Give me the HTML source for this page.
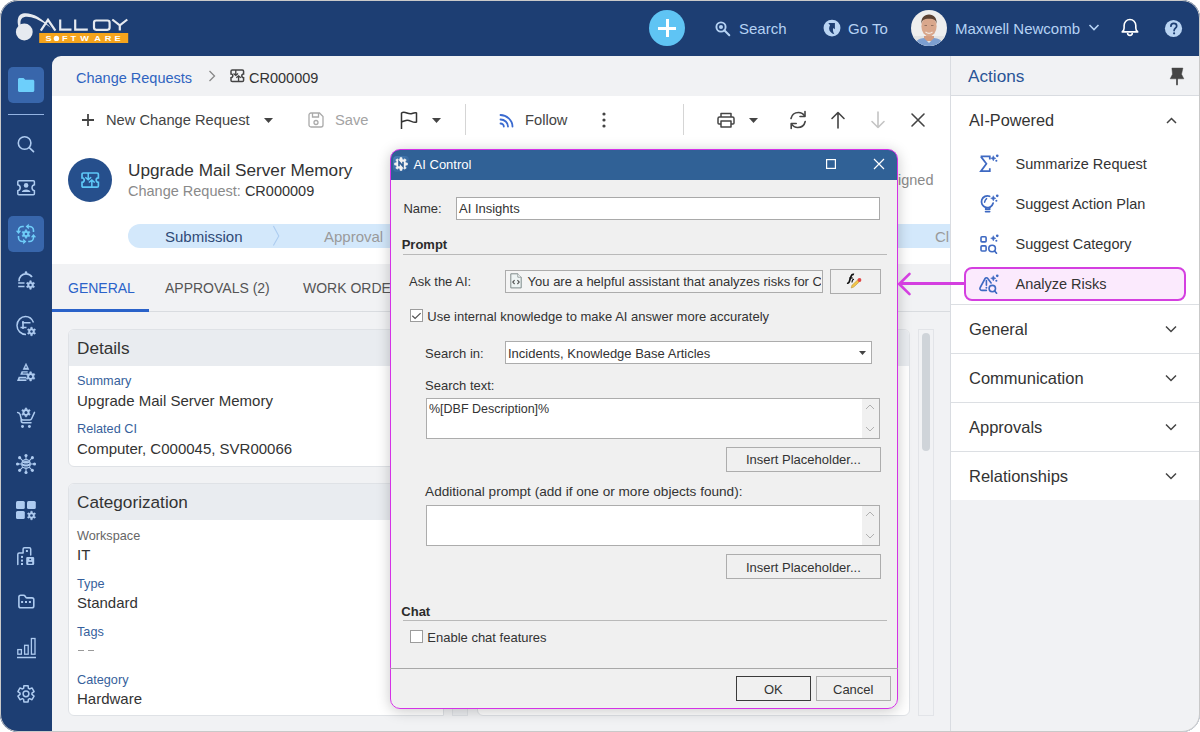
<!DOCTYPE html>
<html><head><meta charset="utf-8">
<style>
*{box-sizing:border-box;margin:0;padding:0}
html,body{width:1200px;height:732px;overflow:hidden;background:#fff;font-family:"Liberation Sans",sans-serif}
.a{position:absolute}
.t{position:absolute;white-space:nowrap;line-height:1}
#win{position:absolute;left:0;top:0;width:1200px;height:732px;border-radius:18px;background:#1d3e73;overflow:hidden}
#frame{position:absolute;left:0;top:0;width:1200px;height:732px;border:1px solid #c9c9c9;border-radius:18px;z-index:100;pointer-events:none}
svg{position:absolute;overflow:visible}
.dlg .t{font-family:"Liberation Sans",sans-serif}
</style></head>
<body>
<div id="win">

<svg style="left:0;top:0" width="140" height="50" viewBox="0 0 140 50">
<path d="M18.5 26.5 C17 22 17.5 16.5 20.5 14.5 C24 12.2 31 13 38 17 C43 20 47.5 24 51 28 C46 24.5 41 21 36 18.8 C30 16.3 25 16 22.5 17.8 C20.5 19.3 20 22.5 20.8 25.5 Z" fill="#e6eaf0"/>
<circle cx="24.3" cy="32" r="8.4" fill="#e6eaf0"/>
<path d="M40.8 30.6 L48 19.8 L55.4 30.6" fill="none" stroke="#e6eaf0" stroke-width="2.2" stroke-linejoin="miter"/>
<path d="M60.2 19.5 V29.7 H71.5 M75.2 19.5 V29.7 H87.8" fill="none" stroke="#e6eaf0" stroke-width="2.2"/>
<rect x="94" y="20.5" width="15.6" height="9.3" rx="2.2" fill="none" stroke="#e6eaf0" stroke-width="2.2"/>
<path d="M112.3 19.5 L119.8 25.3 L127.3 19.5 M119.8 25.3 V30.6" fill="none" stroke="#e6eaf0" stroke-width="2.2"/>
<rect x="39.2" y="33" width="89" height="10" fill="#f5a41c"/>
<text x="48.50" y="41.3" text-anchor="middle" font-family="Liberation Sans" font-size="8" font-weight="700" fill="#fff" transform="translate(48.50 0) scale(1.15 1) translate(-48.50 0)">S</text><text x="64.95" y="41.3" text-anchor="middle" font-family="Liberation Sans" font-size="8" font-weight="700" fill="#fff" transform="translate(64.95 0) scale(1.15 1) translate(-64.95 0)">F</text><text x="73.35" y="41.3" text-anchor="middle" font-family="Liberation Sans" font-size="8" font-weight="700" fill="#fff" transform="translate(73.35 0) scale(1.15 1) translate(-73.35 0)">T</text><text x="84.72" y="41.3" text-anchor="middle" font-family="Liberation Sans" font-size="8" font-weight="700" fill="#fff" transform="translate(84.72 0) scale(1.15 1) translate(-84.72 0)">W</text><text x="97.50" y="41.3" text-anchor="middle" font-family="Liberation Sans" font-size="8" font-weight="700" fill="#fff" transform="translate(97.50 0) scale(1.15 1) translate(-97.50 0)">A</text><text x="107.95" y="41.3" text-anchor="middle" font-family="Liberation Sans" font-size="8" font-weight="700" fill="#fff" transform="translate(107.95 0) scale(1.15 1) translate(-107.95 0)">R</text><text x="117.50" y="41.3" text-anchor="middle" font-family="Liberation Sans" font-size="8" font-weight="700" fill="#fff" transform="translate(117.50 0) scale(1.15 1) translate(-117.50 0)">E</text><circle cx="56.4" cy="38.4" r="2.7" fill="#fff"/>
</svg>
<div class="a" style="left:649px;top:10px;width:36px;height:36px;border-radius:50%;background:#5fc4f4"></div>
<div class="a" style="left:658px;top:26.5px;width:18px;height:3px;background:#fff"></div>
<div class="a" style="left:665.5px;top:19px;width:3px;height:18px;background:#fff"></div>
<svg style="left:714px;top:20px" width="18" height="18" viewBox="0 0 18 18"><circle cx="7" cy="7" r="4.6" fill="none" stroke="#b5d2f4" stroke-width="1.9"/>
<circle cx="7" cy="7" r="2" fill="#b5d2f4"/>
<path d="M10.3 10.3 L15.3 15.3" stroke="#b5d2f4" stroke-width="2" stroke-linecap="round"/></svg>
<div class="t" style="left:739px;top:21.30px;font-size:15px;color:#b5d2f4;font-weight:400;">Search</div>
<svg style="left:823px;top:19px" width="18" height="18" viewBox="0 0 18 18"><circle cx="9" cy="9.1" r="8.45" fill="#b9d4f3"/>
<path d="M5.3 4.1 L11.9 4.1 L11.9 10.2 L10.3 8.9 C9.5 10.8 10.1 13 11.45 15.3 C8.4 14.2 6.1 12.2 6.1 9.4 C6.1 8.3 6.5 7.3 7.1 6.2 Z" fill="#1d3e73"/></svg>
<div class="t" style="left:848px;top:21.30px;font-size:15px;color:#b5d2f4;font-weight:400;">Go To</div>
<svg style="left:911px;top:10px" width="36" height="36" viewBox="0 0 36 36"><defs><clipPath id="av"><circle cx="18" cy="18" r="18"/></clipPath></defs>
<g clip-path="url(#av)"><rect width="36" height="36" fill="#eeeeee"/><rect x="0" y="26" width="36" height="10" fill="#e2e2e2"/>
<path d="M13 26 L13 31 L23 31 L23 26 Z" fill="#d39c80"/>
<path d="M2 37 C4 30 9 28.5 13 28 L18 33 L23 28 C27 28.5 32 30 34 37 Z" fill="#7d9fd0"/>
<ellipse cx="18" cy="16.5" rx="7.6" ry="9.8" fill="#d9a78c"/>
<path d="M10.3 14 C10 8 13 4.5 18 4.5 C23 4.5 26 8 25.7 14 C25 10.5 23.5 8.8 18 8.8 C12.5 8.8 11 10.5 10.3 14 Z" fill="#5b4132"/>
<path d="M14.5 22 C16.5 23.5 19.5 23.5 21.5 22" fill="none" stroke="#f4e8e0" stroke-width="1.2"/>
<path d="M13.5 15.5 H16 M20 15.5 H22.5" stroke="#8a6a5a" stroke-width="0.9"/></g></svg>
<div class="t" style="left:955px;top:21.30px;font-size:15px;color:#b5d2f4;font-weight:400;">Maxwell Newcomb</div>
<svg style="left:1088px;top:22px" width="12" height="10" viewBox="0 0 12 10"><path d="M1.5 3 L6 7.5 L10.5 3" fill="none" stroke="#b5d2f4" stroke-width="1.6"/></svg>
<svg style="left:0;top:0" width="1200" height="56" viewBox="0 0 1200 56"><path d="M1122.2 31.9 C1123.4 30.9 1124.1 29.6 1124.1 27.9 V25.6 C1124.1 22.1 1126.7 19.5 1129.95 19.5 C1133.2 19.5 1135.8 22.1 1135.8 25.6 V27.9 C1135.8 29.6 1136.5 30.9 1137.7 31.9 Z" fill="none" stroke="#fff" stroke-width="1.6" stroke-linejoin="round"/><path d="M1127.6 33 A2.35 2.35 0 0 0 1132.3 33" fill="none" stroke="#fff" stroke-width="1.6"/></svg>
<svg style="left:1164px;top:18.5px" width="19" height="19" viewBox="0 0 19 19"><circle cx="9.5" cy="9.5" r="8.6" fill="#b9d4f3"/>
<path d="M6.9 7.2 C6.9 5.5 8.1 4.4 9.8 4.4 C11.5 4.4 12.7 5.5 12.7 7 C12.7 9.2 10.1 9.3 10.1 11.6" fill="none" stroke="#1d3e73" stroke-width="1.7" stroke-linecap="round"/><circle cx="10.1" cy="14.3" r="1.1" fill="#1d3e73"/></svg>
<div class="a" style="left:8px;top:67px;width:36px;height:36px;border-radius:5px;background:#3866ab"></div>
<svg style="left:17.7px;top:78px" width="16.3" height="14" viewBox="0 0 16.3 14"><path d="M0 1.5 C0 0.7 0.7 0 1.5 0 L5.5 0 L7.3 1.8 L14.8 1.8 C15.6 1.8 16.3 2.5 16.3 3.3 L16.3 12.5 C16.3 13.3 15.6 14 14.8 14 L1.5 14 C0.7 14 0 13.3 0 12.5 Z" fill="#6dcffb"/></svg>
<div class="a" style="left:8px;top:114px;width:36px;height:1.3px;background:#93b3e2"></div>
<div class="a" style="left:8px;top:216px;width:36px;height:36px;border-radius:5px;background:#3866ab"></div>
<svg style="left:0;top:0" width="52" height="732" viewBox="0 0 52 732"><circle cx="24.6" cy="143" r="6.3" fill="none" stroke="#aecbf0" stroke-width="1.6"/><path d="M29.3 147.7 L33.5 151.6" stroke="#aecbf0" stroke-width="1.7" stroke-linecap="round"/><path d="M18.8 180.8 H33.4 C34.2 180.8 34.4 181.2 34.4 181.8 V184.8 C32.9 185.2 32 186.3 32 187.8 C32 189.3 32.9 190.4 34.4 190.8 V193.8 C34.4 194.4 34.2 194.7 33.4 194.7 H18.8 C18 194.7 17.8 194.4 17.8 193.8 V190.8 C19.3 190.4 20.2 189.3 20.2 187.8 C20.2 186.3 19.3 185.2 17.8 184.8 V181.8 C17.8 181.2 18 180.8 18.8 180.8 Z" fill="none" stroke="#aecbf0" stroke-width="1.5"/><circle cx="26.1" cy="185.4" r="2.3" fill="#aecbf0"/><path d="M21.8 192 C21.8 188.5 30.4 188.5 30.4 192 Z" fill="#aecbf0"/><path d="M18.5 232 V230.5 C18.5 228.3 20.3 226.5 22.5 226.5 H23.8 M28.2 226.5 H29.5 C31.7 226.5 33.5 228.3 33.5 230.5 V232 M33.5 236 V237.5 C33.5 239.7 31.7 241.5 29.5 241.5 H28.2 M23.8 241.5 H22.5 C20.3 241.5 18.5 239.7 18.5 237.5 V236" fill="none" stroke="#6fcdf8" stroke-width="1.6"/><path d="M15.8 230.8 H21.2 L18.5 234 Z M28.8 223.8 V229.2 L25.6 226.5 Z M30.8 237.2 H36.2 L33.5 234 Z M23.2 238.8 V244.2 L26.4 241.5 Z" fill="#6fcdf8"/><path d="M25.19 231.11 L25.31 229.86 L26.69 229.86 L26.81 231.11 L27.50 231.40 L28.09 231.85 L29.24 231.33 L29.93 232.53 L28.91 233.26 L29.00 234.00 L28.91 234.74 L29.93 235.47 L29.24 236.67 L28.09 236.15 L27.50 236.60 L26.81 236.89 L26.69 238.14 L25.31 238.14 L25.19 236.89 L24.50 236.60 L23.91 236.15 L22.76 236.67 L22.07 235.47 L23.09 234.74 L23.00 234.00 L23.09 233.26 L22.07 232.53 L22.76 231.33 L23.91 231.85 L24.50 231.40 Z" fill="#6fcdf8" stroke="#6fcdf8" stroke-width="0.6" stroke-linejoin="round"/><circle cx="26" cy="234" r="1.3" fill="#3866ab"/><path d="M19 281.2 C19 277 22 273.8 26 273.8 C28.5 273.8 30.7 275 32 277" fill="none" stroke="#aecbf0" stroke-width="1.7"/><circle cx="26" cy="272.6" r="1.3" fill="#aecbf0"/><path d="M18.2 283 H24.5 M18.2 286.5 H24.5" stroke="#aecbf0" stroke-width="1.5"/><path d="M29.69 282.11 L29.79 280.76 L31.21 280.76 L31.31 282.11 L32.00 282.40 L32.59 282.85 L33.82 282.27 L34.53 283.49 L33.41 284.26 L33.50 285.00 L33.41 285.74 L34.53 286.51 L33.82 287.73 L32.59 287.15 L32.00 287.60 L31.31 287.89 L31.21 289.24 L29.79 289.24 L29.69 287.89 L29.00 287.60 L28.41 287.15 L27.18 287.73 L26.47 286.51 L27.59 285.74 L27.50 285.00 L27.59 284.26 L26.47 283.49 L27.18 282.27 L28.41 282.85 L29.00 282.40 Z" fill="#aecbf0" stroke="#aecbf0" stroke-width="0.6" stroke-linejoin="round"/><circle cx="30.5" cy="285" r="1.2" fill="#1d3e73"/><path d="M33.5 322.5 C32 318.7 28.8 316.5 25.5 316.5 C21 316.5 17 320.5 17 325.5 C17 330.5 21 334.5 26 334.5" fill="none" stroke="#aecbf0" stroke-width="1.5"/><path d="M22 322.7 H30.5 M20.5 327.5 H26.5 M23 321 V329" stroke="#aecbf0" stroke-width="1.6"/><path d="M30.69 328.61 L30.79 327.26 L32.21 327.26 L32.31 328.61 L33.00 328.90 L33.59 329.35 L34.82 328.77 L35.53 329.99 L34.41 330.76 L34.50 331.50 L34.41 332.24 L35.53 333.01 L34.82 334.23 L33.59 333.65 L33.00 334.10 L32.31 334.39 L32.21 335.74 L30.79 335.74 L30.69 334.39 L30.00 334.10 L29.41 333.65 L28.18 334.23 L27.47 333.01 L28.59 332.24 L28.50 331.50 L28.59 330.76 L27.47 329.99 L28.18 328.77 L29.41 329.35 L30.00 328.90 Z" fill="#aecbf0" stroke="#aecbf0" stroke-width="0.6" stroke-linejoin="round"/><circle cx="31.5" cy="331.5" r="1.2" fill="#1d3e73"/><path d="M26 363.4 L28.9 369.5 H23.1 Z" fill="#aecbf0" stroke="#aecbf0" stroke-width="0.6" stroke-linejoin="round"/><rect x="25.3" y="366.5" width="1.4" height="1.3" fill="#1d3e73"/><path d="M21.6 371.2 H27.9 L26.6 374.8 H20.2 Z" fill="#aecbf0"/><path d="M22.8 373 H27.3" stroke="#1d3e73" stroke-width="0.9"/><path d="M18.7 376.7 H26 L26.5 381 H17 Z" fill="#aecbf0"/><path d="M19.7 378.9 H26" stroke="#1d3e73" stroke-width="0.9"/><path d="M29.70 373.22 L29.84 371.86 L31.36 371.86 L31.50 373.22 L32.25 373.54 L32.90 374.04 L34.15 373.48 L34.91 374.79 L33.80 375.59 L33.90 376.40 L33.80 377.21 L34.91 378.01 L34.15 379.32 L32.90 378.76 L32.25 379.26 L31.50 379.58 L31.36 380.94 L29.84 380.94 L29.70 379.58 L28.95 379.26 L28.30 378.76 L27.05 379.32 L26.29 378.01 L27.40 377.21 L27.30 376.40 L27.40 375.59 L26.29 374.79 L27.05 373.48 L28.30 374.04 L28.95 373.54 Z" fill="#aecbf0" stroke="#aecbf0" stroke-width="0.6" stroke-linejoin="round"/><circle cx="30.6" cy="376.4" r="1.5" fill="#1d3e73"/><path d="M17.6 412.4 C18.8 412.4 19.8 413.3 20.2 414.6 L21.1 418.5 C21.3 419.4 22 420.1 23 420.1 H29.8 C30.6 420.1 31.3 419.6 31.6 418.8 L34.5 412.4 M21.2 419 V420.8 C21.2 421.9 22 422.7 23 422.7 H31" fill="none" stroke="#aecbf0" stroke-width="1.5" stroke-linecap="round"/><circle cx="22.5" cy="426.5" r="1.45" fill="#aecbf0"/><circle cx="29.4" cy="426.5" r="1.45" fill="#aecbf0"/><path d="M25.13 409.32 L25.26 407.96 L26.74 407.96 L26.87 409.32 L27.60 409.63 L28.23 410.11 L29.47 409.54 L30.21 410.82 L29.10 411.61 L29.20 412.40 L29.10 413.19 L30.21 413.98 L29.47 415.26 L28.23 414.69 L27.60 415.17 L26.87 415.48 L26.74 416.84 L25.26 416.84 L25.13 415.48 L24.40 415.17 L23.77 414.69 L22.53 415.26 L21.79 413.98 L22.90 413.19 L22.80 412.40 L22.90 411.61 L21.79 410.82 L22.53 409.54 L23.77 410.11 L24.40 409.63 Z" fill="#aecbf0" stroke="#aecbf0" stroke-width="0.6" stroke-linejoin="round"/><circle cx="26" cy="412.4" r="1.5" fill="#1d3e73"/><path d="M30.50 464.00 L34.50 464.00" stroke="#aecbf0" stroke-width="1.1"/><circle cx="34.50" cy="464.00" r="1.55" fill="#aecbf0"/><path d="M29.18 467.18 L32.36 470.36" stroke="#aecbf0" stroke-width="1.1"/><circle cx="32.36" cy="470.36" r="1.55" fill="#aecbf0"/><path d="M26.00 468.50 L26.00 472.50" stroke="#aecbf0" stroke-width="1.1"/><circle cx="26.00" cy="472.50" r="1.55" fill="#aecbf0"/><path d="M22.82 467.18 L19.64 470.36" stroke="#aecbf0" stroke-width="1.1"/><circle cx="19.64" cy="470.36" r="1.55" fill="#aecbf0"/><path d="M21.50 464.00 L17.50 464.00" stroke="#aecbf0" stroke-width="1.1"/><circle cx="17.50" cy="464.00" r="1.55" fill="#aecbf0"/><path d="M22.82 460.82 L19.64 457.64" stroke="#aecbf0" stroke-width="1.1"/><circle cx="19.64" cy="457.64" r="1.55" fill="#aecbf0"/><path d="M26.00 459.50 L26.00 455.50" stroke="#aecbf0" stroke-width="1.1"/><circle cx="26.00" cy="455.50" r="1.55" fill="#aecbf0"/><path d="M29.18 460.82 L32.36 457.64" stroke="#aecbf0" stroke-width="1.1"/><circle cx="32.36" cy="457.64" r="1.55" fill="#aecbf0"/><circle cx="26" cy="464" r="4.9" fill="#aecbf0"/><path d="M22.6 463.2 C24.5 464.3 27.5 464.3 29.4 463.2 M22.6 466.2 C24.5 467.3 27.5 467.3 29.4 466.2" fill="none" stroke="#1d3e73" stroke-width="0.9"/><path d="M23.5 461 C25 460.4 27 460.4 28.5 461" fill="none" stroke="#1d3e73" stroke-width="0.6"/><rect x="16" y="501" width="8.8" height="8" rx="1.5" fill="#aecbf0"/><rect x="27" y="501" width="8.8" height="8" rx="1.5" fill="#aecbf0"/><rect x="16" y="511" width="8.8" height="8" rx="1.5" fill="#aecbf0"/><path d="M30.69 512.61 L30.79 511.26 L32.21 511.26 L32.31 512.61 L33.00 512.90 L33.59 513.35 L34.82 512.77 L35.53 513.99 L34.41 514.76 L34.50 515.50 L34.41 516.24 L35.53 517.01 L34.82 518.23 L33.59 517.65 L33.00 518.10 L32.31 518.39 L32.21 519.74 L30.79 519.74 L30.69 518.39 L30.00 518.10 L29.41 517.65 L28.18 518.23 L27.47 517.01 L28.59 516.24 L28.50 515.50 L28.59 514.76 L27.47 513.99 L28.18 512.77 L29.41 513.35 L30.00 512.90 Z" fill="#aecbf0" stroke="#aecbf0" stroke-width="0.6" stroke-linejoin="round"/><circle cx="31.5" cy="515.5" r="1.3" fill="#1d3e73"/><path d="M17.8 564.6 V554.5 C17.8 553.7 18.4 553.1 19.2 553.1 H23.1 V549.1 C23.1 548.3 23.7 547.7 24.5 547.7 H29.3 C30.1 547.7 30.7 548.3 30.7 549.1 V555" fill="none" stroke="#aecbf0" stroke-width="1.5" stroke-linecap="round" stroke-linejoin="round"/><rect x="21" y="555.9" width="2" height="2" fill="#aecbf0"/><rect x="21" y="559.6" width="2" height="2" fill="#aecbf0"/><rect x="21" y="563" width="2" height="2" fill="#aecbf0"/><rect x="25.9" y="550" width="2" height="2" fill="#aecbf0"/><rect x="26.2" y="556.9" width="8" height="8.1" rx="1.2" fill="#aecbf0"/><rect x="29.4" y="558.8" width="1.7" height="1.3" fill="#1d3e73"/><rect x="28.3" y="561.9" width="3.9" height="1.8" fill="#1d3e73"/><path d="M18.9 597 C18.9 596 19.7 595.2 20.7 595.2 H23.6 C24.2 595.2 24.7 595.5 25 596 L25.7 597.1 C26 597.6 26.5 597.9 27.1 597.9 H32 C33 597.9 33.8 598.7 33.8 599.7 V605.9 C33.8 606.9 33 607.7 32 607.7 H20.7 C19.7 607.7 18.9 606.9 18.9 605.9 Z" fill="none" stroke="#aecbf0" stroke-width="1.6"/><rect x="21.1" y="601" width="2" height="2" fill="#aecbf0"/><rect x="25" y="601" width="2" height="2" fill="#aecbf0"/><rect x="28.9" y="601" width="2" height="2" fill="#aecbf0"/><rect x="17.8" y="649.6" width="3.6" height="4.6" fill="none" stroke="#aecbf0" stroke-width="1.3"/><rect x="24.6" y="645.3" width="3.6" height="8.9" fill="none" stroke="#aecbf0" stroke-width="1.3"/><rect x="31.4" y="638.5" width="3.6" height="15.7" fill="none" stroke="#aecbf0" stroke-width="1.3"/><path d="M17 657.5 H36" stroke="#aecbf0" stroke-width="1.4"/><path d="M23.60 688.30 L23.90 685.67 L28.10 685.67 L28.40 688.30 L29.56 688.97 L31.99 687.91 L34.09 691.55 L31.96 693.13 L31.96 694.47 L34.09 696.05 L31.99 699.69 L29.56 698.63 L28.40 699.30 L28.10 701.93 L23.90 701.93 L23.60 699.30 L22.44 698.63 L20.01 699.69 L17.91 696.05 L20.04 694.47 L20.04 693.13 L17.91 691.55 L20.01 687.91 L22.44 688.97 Z" fill="none" stroke="#aecbf0" stroke-width="1.5" stroke-linejoin="round"/><circle cx="26" cy="693.8" r="2.9" fill="none" stroke="#aecbf0" stroke-width="1.5"/></svg>
<div class="a" style="left:52px;top:56px;width:898px;height:676px;background:#f1f2f4;border-top-left-radius:9px"></div>
<div class="t" style="left:76px;top:70.73px;font-size:14.5px;color:#2f64c0;font-weight:400;">Change Requests</div>
<svg style="left:208px;top:70px" width="8" height="12" viewBox="0 0 8 12"><path d="M1.5 1 L6.5 6 L1.5 11" fill="none" stroke="#888" stroke-width="1.3"/></svg>
<svg style="left:230.7px;top:70px" width="12.6" height="11.6" viewBox="0 0 12.6 11.6"><path d="M1.3 0 H11.299999999999999 Q12.6 0 12.6 1.3 V3.944 C10.1872 3.944 10.1872 7.656 12.6 7.656 V10.299999999999999 Q12.6 11.6 11.299999999999999 11.6 H1.3 Q0 11.6 0 10.299999999999999 V7.656 C2.4128 7.656 2.4128 3.944 0 3.944 V1.3 Q0 0 1.3 0 Z" fill="none" stroke="#444" stroke-width="1.5"/><path d="M4.788 0 V5.452 M2.52 3.48 L4.788 5.452 L7.056 3.48 M7.56 11.6 V5.8 M5.292 7.772 L7.56 5.8 L9.828 7.772" fill="none" stroke="#444" stroke-width="1.35"/></svg>
<div class="t" style="left:249px;top:70.73px;font-size:14.5px;color:#333;font-weight:400;">CR000009</div>
<div class="a" style="left:52px;top:96px;width:898px;height:168px;background:#fff"></div>
<svg style="left:82px;top:114px" width="12" height="12" viewBox="0 0 12 12"><path d="M6 0 V12 M0 6 H12" stroke="#444" stroke-width="1.8"/></svg>
<div class="t" style="left:106px;top:112.96px;font-size:14.7px;color:#444;font-weight:400;">New Change Request</div>
<svg style="left:264px;top:118px" width="9" height="5" viewBox="0 0 9 5"><path d="M0 0 H9 L4.5 5 Z" fill="#444"/></svg>
<svg style="left:308px;top:112px" width="16" height="16" viewBox="0 0 16 16"><path d="M1 3 C1 1.9 1.9 1 3 1 L11.5 1 L15 4.5 L15 13 C15 14.1 14.1 15 13 15 L3 15 C1.9 15 1 14.1 1 13 Z" fill="none" stroke="#aaa" stroke-width="1.3"/>
<path d="M4.5 1 V5 H10.5 V1" fill="none" stroke="#aaa" stroke-width="1.3"/><circle cx="8" cy="10.5" r="2" fill="none" stroke="#aaa" stroke-width="1.3"/></svg>
<div class="t" style="left:335px;top:112.56px;font-size:14.7px;color:#a3a3a3;font-weight:400;">Save</div>
<svg style="left:400px;top:111px" width="18" height="18" viewBox="0 0 18 18"><path d="M1.5 18 V2 C5 -0.5 8 4 12 2.5 C14 1.8 15.5 1.5 16.5 2 V11 C13 12.5 10 8.5 6 9.5 C4 10 2.5 10.5 1.5 11" fill="none" stroke="#333" stroke-width="1.5" stroke-linejoin="round"/></svg>
<svg style="left:432px;top:118px" width="9" height="5" viewBox="0 0 9 5"><path d="M0 0 H9 L4.5 5 Z" fill="#444"/></svg>
<div class="a" style="left:465px;top:104px;width:1px;height:31px;background:#d5d5d5"></div>
<svg style="left:499px;top:113px" width="16" height="15" viewBox="0 0 16 15"><path d="M1.5 2 C7.5 2 13.5 7 13.5 13.5 M1.5 6.5 C5.5 6.5 9 9.5 9 13.5 M1.5 10.5 C3.5 10.5 4.8 11.8 4.8 13.5" fill="none" stroke="#3a6ad0" stroke-width="1.8" stroke-linecap="round"/></svg>
<div class="t" style="left:525px;top:112.56px;font-size:14.7px;color:#444;font-weight:400;">Follow</div>
<svg style="left:601px;top:112px" width="6" height="16" viewBox="0 0 6 16"><circle cx="3" cy="2" r="1.6" fill="#444"/><circle cx="3" cy="8" r="1.6" fill="#444"/><circle cx="3" cy="14" r="1.6" fill="#444"/></svg>
<div class="a" style="left:683px;top:104px;width:1px;height:31px;background:#d5d5d5"></div>
<svg style="left:717px;top:112px" width="18" height="16" viewBox="0 0 18 16"><path d="M4 5 V1.5 H14 V5 M4 12 H2 C1.5 12 1 11.5 1 11 V6.5 C1 5.5 1.7 5 2.5 5 H15.5 C16.3 5 17 5.5 17 6.5 V11 C17 11.5 16.5 12 16 12 H14 M4 9 H14 V15 H4 Z" fill="none" stroke="#444" stroke-width="1.5" stroke-linejoin="round"/></svg>
<svg style="left:749px;top:118px" width="9" height="5" viewBox="0 0 9 5"><path d="M0 0 H9 L4.5 5 Z" fill="#444"/></svg>
<svg style="left:788px;top:110px" width="20" height="20" viewBox="0 0 20 20"><path d="M3 8.5 C3.8 5 6.8 2.5 10.5 2.5 C13 2.5 15.3 3.8 16.5 5.8 M17.2 11.5 C16.4 15 13.4 17.5 9.7 17.5 C7.2 17.5 4.9 16.2 3.7 14.2" fill="none" stroke="#444" stroke-width="1.6" stroke-linecap="round"/>
<path d="M17 1.5 V6.5 H12" fill="none" stroke="#444" stroke-width="1.6" stroke-linecap="round" stroke-linejoin="round"/><path d="M3.2 18.5 V13.5 H8.2" fill="none" stroke="#444" stroke-width="1.6" stroke-linecap="round" stroke-linejoin="round"/></svg>
<svg style="left:830px;top:111px" width="16" height="18" viewBox="0 0 16 18"><path d="M8 17 V1.5 M2 7.5 L8 1.5 L14 7.5" fill="none" stroke="#444" stroke-width="1.6" stroke-linecap="round" stroke-linejoin="round"/></svg>
<svg style="left:870px;top:111px" width="16" height="18" viewBox="0 0 16 18"><path d="M8 1 V16.5 M2 10.5 L8 16.5 L14 10.5" fill="none" stroke="#c4c4c4" stroke-width="1.6" stroke-linecap="round" stroke-linejoin="round"/></svg>
<svg style="left:911px;top:113px" width="14" height="14" viewBox="0 0 14 14"><path d="M1 1 L13 13 M13 1 L1 13" fill="none" stroke="#444" stroke-width="1.6" stroke-linecap="round"/></svg>
<div class="a" style="left:68px;top:158px;width:44px;height:44px;border-radius:50%;background:#264f8c"></div>
<svg style="left:81.8px;top:172.6px" width="16.4" height="14.2" viewBox="0 0 16.4 14.2"><path d="M1.3 0 H15.099999999999998 Q16.4 0 16.4 1.3 V4.827999999999999 C13.446399999999999 4.827999999999999 13.446399999999999 9.372 16.4 9.372 V12.899999999999999 Q16.4 14.2 15.099999999999998 14.2 H1.3 Q0 14.2 0 12.899999999999999 V9.372 C2.9536 9.372 2.9536 4.827999999999999 0 4.827999999999999 V1.3 Q0 0 1.3 0 Z" fill="none" stroke="#5ec8f7" stroke-width="1.7"/><path d="M6.231999999999999 0 V6.6739999999999995 M3.28 4.26 L6.231999999999999 6.6739999999999995 L9.184 4.26 M9.839999999999998 14.2 V7.1 M6.887999999999999 9.514 L9.839999999999998 7.1 L12.792 9.514" fill="none" stroke="#5ec8f7" stroke-width="1.53"/></svg>
<div class="t" style="left:128px;top:162.04px;font-size:17.2px;color:#333;font-weight:400;">Upgrade Mail Server Memory</div>
<div class="t" style="left:128px;top:184.13px;font-size:14.5px;color:#8a8a8a;font-weight:400;">Change Request: <span style="color:#333">CR000009</span></div>
<div class="a" style="left:128px;top:224px;width:822px;height:24px;background:#d3e8fb;border-radius:12px 0 0 12px"></div>
<svg style="left:270px;top:224px" width="10" height="24" viewBox="0 0 10 24"><path d="M3.4 2 L8.8 12 L3.4 21.5" fill="none" stroke="#acccf0" stroke-width="1.1"/></svg>
<div class="t" style="left:165px;top:229.10px;font-size:15px;color:#2f4a76;font-weight:400;">Submission</div>
<div class="t" style="left:324px;top:229.10px;font-size:15px;color:#9a9a9a;font-weight:400;">Approval</div>
<div class="t" style="left:935px;top:229.00px;font-size:15px;color:#9a9a9a;font-weight:400;">Cl</div>
<div class="t" style="left:888.3px;top:172.73px;font-size:14.5px;color:#8a8a8a;font-weight:400;">Signed</div>
<div class="a" style="left:52px;top:311px;width:898px;height:1px;background:#d9dce0"></div>
<div class="a" style="left:52px;top:309px;width:97px;height:3px;background:#2a62c9"></div>
<div class="t" style="left:68px;top:281.15px;font-size:14px;color:#2a62c9;font-weight:400;">GENERAL</div>
<div class="t" style="left:165px;top:281.15px;font-size:14px;color:#555;font-weight:400;">APPROVALS (2)</div>
<div class="t" style="left:303px;top:281.15px;font-size:14px;color:#555;font-weight:400;">WORK ORDERS</div>
<div class="a" style="left:68px;top:329px;width:500px;height:138px;background:#fff;border:1px solid #dfe2e6;border-radius:6px;overflow:hidden"></div>
<div class="a" style="left:69px;top:330px;width:498px;height:36px;background:#e9ecf0;border-radius:5px 5px 0 0"></div>
<div class="t" style="left:77px;top:339.64px;font-size:17.2px;color:#333;font-weight:400;">Details</div>
<div class="t" style="left:77px;top:375.25px;font-size:12.7px;color:#365f9c;font-weight:400;">Summary</div>
<div class="t" style="left:77px;top:393.30px;font-size:15px;color:#333;font-weight:400;">Upgrade Mail Server Memory</div>
<div class="t" style="left:77px;top:422.95px;font-size:12.7px;color:#365f9c;font-weight:400;">Related CI</div>
<div class="t" style="left:77px;top:440.60px;font-size:15px;color:#333;font-weight:400;">Computer, C000045, SVR00066</div>
<div class="a" style="left:68px;top:483px;width:376px;height:233px;background:#fff;border:1px solid #dfe2e6;border-radius:6px 6px 0 6px"></div>
<div class="a" style="left:69px;top:484px;width:374px;height:36px;background:#e9ecf0;border-radius:5px 5px 0 0"></div>
<div class="a" style="left:452px;top:690px;width:16px;height:26px;background:#eceef1;border:1px solid #dfe2e6"></div>
<div class="t" style="left:77px;top:493.74px;font-size:17.2px;color:#333;font-weight:400;">Categorization</div>
<div class="t" style="left:77px;top:529.55px;font-size:12.7px;color:#666;font-weight:400;">Workspace</div>
<div class="t" style="left:77px;top:547.30px;font-size:15px;color:#333;font-weight:400;">IT</div>
<div class="t" style="left:77px;top:577.55px;font-size:12.7px;color:#365f9c;font-weight:400;">Type</div>
<div class="t" style="left:77px;top:595.00px;font-size:15px;color:#333;font-weight:400;">Standard</div>
<div class="t" style="left:77px;top:626.25px;font-size:12.7px;color:#365f9c;font-weight:400;">Tags</div>
<div class="a" style="left:78px;top:650px;width:6px;height:1.3px;background:#9a9a9a"></div>
<div class="a" style="left:88px;top:650px;width:6px;height:1.3px;background:#9a9a9a"></div>
<div class="t" style="left:77px;top:674.25px;font-size:12.7px;color:#365f9c;font-weight:400;">Category</div>
<div class="t" style="left:77px;top:691.30px;font-size:15px;color:#333;font-weight:400;">Hardware</div>
<div class="a" style="left:52px;top:716px;width:898px;height:16px;background:#f1f2f4"></div>
<div class="a" style="left:477px;top:329px;width:433px;height:387px;background:#fff;border:1px solid #dfe2e6;border-radius:6px;overflow:hidden"></div>
<div class="a" style="left:478px;top:330px;width:431px;height:36px;background:#e9ecf0;border-radius:5px 5px 0 0"></div>
<div class="a" style="left:918px;top:329px;width:16px;height:387px;border:1px solid #e2e4e8;background:#f1f2f4"></div>
<div class="a" style="left:922px;top:333px;width:8px;height:118px;background:#cfd4d9;border-radius:4px"></div>
<div class="a" style="left:950px;top:56px;width:250px;height:676px;background:#f1f2f4;border-left:1px solid #d9dce1"></div>
<div class="a" style="left:951px;top:95px;width:249px;height:1px;background:#d9dce1"></div>
<div class="t" style="left:968px;top:67.74px;font-size:17.2px;color:#2a5597;font-weight:400;">Actions</div>
<svg style="left:1168px;top:66px" width="18" height="20" viewBox="0 0 18 20"><path d="M3.9 2.1 H14.9 L13.5 8.2 L15.8 12.8 H2.2 L4.5 8.2 Z" fill="#454545" stroke="#454545" stroke-width="0.5" stroke-linejoin="round"/><path d="M9 12.5 V18.5" stroke="#454545" stroke-width="1.7" stroke-linecap="round"/></svg>
<div class="a" style="left:951px;top:96px;width:249px;height:404px;background:#fff"></div>
<div class="t" style="left:969px;top:112.00px;font-size:16.3px;color:#333;font-weight:400;">AI-Powered</div>
<svg style="left:1166px;top:117px" width="11" height="7" viewBox="0 0 11 7"><path d="M1 6 L5.5 1.5 L10 6" fill="none" stroke="#444" stroke-width="1.5"/></svg>
<div class="t" style="left:1015.5px;top:156.73px;font-size:14.5px;color:#333;font-weight:400;">Summarize Request</div>
<div class="t" style="left:1015.5px;top:196.73px;font-size:14.5px;color:#333;font-weight:400;">Suggest Action Plan</div>
<div class="t" style="left:1015.5px;top:236.73px;font-size:14.5px;color:#333;font-weight:400;">Suggest Category</div>
<div class="a" style="left:964px;top:267px;width:222px;height:34px;background:#fbeafd;border:2px solid #d43fe0;border-radius:8px"></div>
<svg style="left:0;top:0" width="1200" height="732" viewBox="0 0 1200 732"><path d="M980.6 156.4 H989.8 V159.4 M980.9 156.6 L986.4 163.8 L980.9 171.1 H989.8 V168.3" fill="none" stroke="#3e69c2" stroke-width="1.75" stroke-linejoin="miter"/><path d="M993.3 155.70000000000002 Q993.65 157.95000000000002 995.9 158.3 Q993.65 158.65 993.3 160.9 Q992.9499999999999 158.65 990.6999999999999 158.3 Q992.9499999999999 157.95000000000002 993.3 155.70000000000002 Z" fill="#3e69c2" stroke="#3e69c2" stroke-width="0.5" stroke-linejoin="round"/><circle cx="997.25" cy="155.85000000000002" r="1.35" fill="#3e69c2"/><circle cx="996.3499999999999" cy="160.8" r="1.05" fill="#3e69c2"/><path d="M989.6 196.3 A5.9 5.9 0 1 0 993.1 203.2" fill="none" stroke="#3e69c2" stroke-width="1.75" stroke-linecap="round"/><path d="M985.8 206.8 V209.1 H989.6 V206.8" fill="none" stroke="#3e69c2" stroke-width="1.75"/><path d="M985.6 211.6 H989.6" stroke="#3e69c2" stroke-width="1.8" stroke-linecap="round"/><path d="M986.6 198.6 C985.6 199.3 984.9 200.6 984.6 202.2" fill="none" stroke="#3e69c2" stroke-width="1.5" stroke-linecap="round"/><path d="M993.3 195.70000000000002 Q993.65 197.95000000000002 995.9 198.3 Q993.65 198.65 993.3 200.9 Q992.9499999999999 198.65 990.6999999999999 198.3 Q992.9499999999999 197.95000000000002 993.3 195.70000000000002 Z" fill="#3e69c2" stroke="#3e69c2" stroke-width="0.5" stroke-linejoin="round"/><circle cx="997.25" cy="195.85000000000002" r="1.35" fill="#3e69c2"/><circle cx="996.3499999999999" cy="200.8" r="1.05" fill="#3e69c2"/><rect x="981" y="236.8" width="5.1" height="5.1" rx="1" fill="none" stroke="#3e69c2" stroke-width="1.6"/><rect x="981" y="245.9" width="5.1" height="5.1" rx="1" fill="none" stroke="#3e69c2" stroke-width="1.6"/><circle cx="992.1" cy="248.5" r="3.3" fill="none" stroke="#3e69c2" stroke-width="1.6"/><path d="M994.6 251 L996.5 253.2" stroke="#3e69c2" stroke-width="1.7" stroke-linecap="round"/><path d="M993.3 235.70000000000002 Q993.65 237.95000000000002 995.9 238.3 Q993.65 238.65 993.3 240.9 Q992.9499999999999 238.65 990.6999999999999 238.3 Q992.9499999999999 237.95000000000002 993.3 235.70000000000002 Z" fill="#3e69c2" stroke="#3e69c2" stroke-width="0.5" stroke-linejoin="round"/><circle cx="997.25" cy="235.85000000000002" r="1.35" fill="#3e69c2"/><circle cx="996.3499999999999" cy="240.8" r="1.05" fill="#3e69c2"/><path d="M986.4 290.4 H981.8 C980.2 290.4 979.4 288.9 980.2 287.5 L985.1 278.5 C985.7 277.4 987.2 277.4 987.8 278.5 L991.1 283" fill="none" stroke="#3e69c2" stroke-width="1.6" stroke-linecap="round" stroke-linejoin="round"/><path d="M986.4 280.6 V285.2" stroke="#3e69c2" stroke-width="1.6" stroke-linecap="round"/><circle cx="986.4" cy="287.7" r="0.95" fill="#3e69c2"/><circle cx="992.3" cy="288.6" r="3.2" fill="none" stroke="#3e69c2" stroke-width="1.6"/><path d="M994.9 291.3 L996.6 293.2" stroke="#3e69c2" stroke-width="1.7" stroke-linecap="round"/><path d="M993.3 275.7 Q993.65 277.95 995.9 278.3 Q993.65 278.65000000000003 993.3 280.90000000000003 Q992.9499999999999 278.65000000000003 990.6999999999999 278.3 Q992.9499999999999 277.95 993.3 275.7 Z" fill="#3e69c2" stroke="#3e69c2" stroke-width="0.5" stroke-linejoin="round"/><circle cx="997.25" cy="275.85" r="1.35" fill="#3e69c2"/><circle cx="996.3499999999999" cy="280.8" r="1.05" fill="#3e69c2"/></svg>
<div class="t" style="left:1015.5px;top:277.43px;font-size:14.5px;color:#333;font-weight:400;">Analyze Risks</div>
<div class="a" style="left:951px;top:304px;width:249px;height:1px;background:#dcdfe3"></div>
<div class="t" style="left:969px;top:321.43px;font-size:16.5px;color:#333;font-weight:400;">General</div>
<svg style="left:1165px;top:325.1px" width="12" height="8" viewBox="0 0 12 8"><path d="M1 1.5 L6 6.5 L11 1.5" fill="none" stroke="#444" stroke-width="1.5"/></svg>
<div class="a" style="left:951px;top:353px;width:249px;height:1px;background:#dcdfe3"></div>
<div class="t" style="left:969px;top:370.43px;font-size:16.5px;color:#333;font-weight:400;">Communication</div>
<svg style="left:1165px;top:374.1px" width="12" height="8" viewBox="0 0 12 8"><path d="M1 1.5 L6 6.5 L11 1.5" fill="none" stroke="#444" stroke-width="1.5"/></svg>
<div class="a" style="left:951px;top:402px;width:249px;height:1px;background:#dcdfe3"></div>
<div class="t" style="left:969px;top:419.43px;font-size:16.5px;color:#333;font-weight:400;">Approvals</div>
<svg style="left:1165px;top:423.1px" width="12" height="8" viewBox="0 0 12 8"><path d="M1 1.5 L6 6.5 L11 1.5" fill="none" stroke="#444" stroke-width="1.5"/></svg>
<div class="a" style="left:951px;top:451px;width:249px;height:1px;background:#dcdfe3"></div>
<div class="t" style="left:969px;top:468.43px;font-size:16.5px;color:#333;font-weight:400;">Relationships</div>
<svg style="left:1165px;top:472.1px" width="12" height="8" viewBox="0 0 12 8"><path d="M1 1.5 L6 6.5 L11 1.5" fill="none" stroke="#444" stroke-width="1.5"/></svg>
<div class="a" style="left:390px;top:149px;width:508px;height:560px;border:1px solid #d432e6;border-radius:10px;background:linear-gradient(#306196 0,#306196 30px,#f0f0f0 30px);box-shadow:0 2px 14px rgba(0,0,0,0.22);overflow:hidden"></div>
<div class="a" style="left:393px;top:156px;width:16px;height:16px;background:linear-gradient(135deg,#4a80b8,#2a5a90);border-radius:4px"></div>
<svg style="left:394px;top:157px" width="14" height="14" viewBox="0 0 14 14"><path d="M5.81 2.25 L6.03 0.47 L7.97 0.47 L8.19 2.25 L8.88 2.47 L9.52 2.80 L10.93 1.70 L12.30 3.07 L11.20 4.48 L11.53 5.12 L11.75 5.81 L13.53 6.03 L13.53 7.97 L11.75 8.19 L11.53 8.88 L11.20 9.52 L12.30 10.93 L10.93 12.30 L9.52 11.20 L8.88 11.53 L8.19 11.75 L7.97 13.53 L6.03 13.53 L5.81 11.75 L5.12 11.53 L4.48 11.20 L3.07 12.30 L1.70 10.93 L2.80 9.52 L2.47 8.88 L2.25 8.19 L0.47 7.97 L0.47 6.03 L2.25 5.81 L2.47 5.12 L2.80 4.48 L1.70 3.07 L3.07 1.70 L4.48 2.80 L5.12 2.47 Z" fill="#f2f2f2" stroke="#f2f2f2" stroke-width="0.5" stroke-linejoin="round"/><path d="M5 9.3 V4.7 L9 9.3 V4.7" fill="none" stroke="#2d5d93" stroke-width="1.6"/></svg>
<div class="t" style="left:413.6px;top:158.30px;font-size:13px;color:#ffffff;font-weight:400;">AI Control</div>
<svg style="left:826px;top:159px" width="10" height="10" viewBox="0 0 10 10"><rect x="0.6" y="0.6" width="8.8" height="8.8" fill="none" stroke="#fff" stroke-width="1.2"/></svg>
<svg style="left:873px;top:158px" width="12" height="12" viewBox="0 0 12 12"><path d="M1 1 L11 11 M11 1 L1 11" stroke="#fff" stroke-width="1.2"/></svg>
<div class="t" style="left:403.4px;top:202.00px;font-size:13px;color:#333;font-weight:400;">Name:</div>
<div class="a" style="left:456px;top:197px;width:424px;height:23px;background:#fff;border:1px solid #a9a9a9"></div>
<div class="t" style="left:459px;top:202.00px;font-size:13px;color:#333;font-weight:400;">AI Insights</div>
<div class="t" style="left:401.7px;top:238.40px;font-size:13px;color:#2b2b2b;font-weight:700;">Prompt</div>
<div class="a" style="left:403px;top:254px;width:484px;height:1px;background:#b9b9b9"></div>
<div class="t" style="left:409px;top:275.00px;font-size:13px;color:#333;font-weight:400;">Ask the AI:</div>
<div class="a" style="left:505px;top:270px;width:318px;height:23px;background:#f4f4f4;border:1px solid #acacac"></div>
<svg style="left:510px;top:273px" width="12" height="16" viewBox="0 0 12 16"><path d="M0.8 0.8 H7.8 L11.2 4.2 V14.9 H0.8 Z" fill="#eef4f4" stroke="#7f8b8b" stroke-width="1"/><path d="M7.8 0.8 V4.2 H11.2" fill="#fff" stroke="#7f8b8b" stroke-width="0.8"/><path d="M4.6 7.2 L2.8 9.1 L4.6 11 M7.4 7.2 L9.2 9.1 L7.4 11" fill="none" stroke="#505050" stroke-width="1.1"/></svg>
<div class="a" style="left:527px;top:270px;width:294px;height:23px;overflow:hidden">
<div class="t" style="left:0.6px;top:5.00px;font-size:13px;color:#333;font-weight:400;">You are a helpful assistant that analyzes risks for Change Requests</div>
</div>
<div class="a" style="left:830px;top:269px;width:51px;height:25px;background:#f0f0f0;border:1px solid #acacac"></div>
<svg style="left:0;top:0" width="1200" height="732" viewBox="0 0 1200 732">
<path d="M847 283.2 C848.6 283.6 849.3 282.2 849.8 280 L851.2 276 C851.7 274.6 852.6 274 854 274.4" fill="none" stroke="#111" stroke-width="1.7"/>
<path d="M849.2 278 H852.8" stroke="#111" stroke-width="1.2"/>
<path d="M852 282.5 C852 280.5 852.5 279.5 854 279.3" fill="none" stroke="#111" stroke-width="1.1"/>
<path d="M851.2 288 L852 285.2 L858 279.6 L859.8 281.4 L853.8 287 Z" fill="#f2c54a" stroke="#b08a2a" stroke-width="0.5"/>
<circle cx="859.5" cy="280" r="1.9" fill="#e04848"/>
</svg>
<div class="a" style="left:410px;top:309px;width:13px;height:13px;background:#fff;border:1px solid #9c9c9c"></div>
<svg style="left:411px;top:310px" width="11" height="11" viewBox="0 0 11 11"><path d="M1.3 5.8 L4.1 8.4 L9.6 3.1" fill="none" stroke="#505050" stroke-width="1.2"/></svg>
<div class="t" style="left:427.3px;top:309.60px;font-size:13px;color:#333;font-weight:400;">Use internal knowledge to make AI answer more accurately</div>
<div class="t" style="left:425.1px;top:347.00px;font-size:13px;color:#333;font-weight:400;">Search in:</div>
<div class="a" style="left:505px;top:341px;width:367px;height:23px;background:#fff;border:1px solid #acacac"></div>
<div class="t" style="left:508px;top:347.00px;font-size:13px;color:#333;font-weight:400;">Incidents, Knowledge Base Articles</div>
<svg style="left:859px;top:351px" width="8" height="5" viewBox="0 0 8 5"><path d="M0 0 H7 L3.5 4 Z" fill="#444"/></svg>
<div class="t" style="left:425.1px;top:379.00px;font-size:13px;color:#333;font-weight:400;">Search text:</div>
<div class="a" style="left:426px;top:398px;width:454px;height:41px;background:#fff;border:1px solid #acacac"></div>
<div class="a" style="left:862px;top:399px;width:17px;height:39px;background:#f0f0f0"></div>
<svg style="left:864px;top:402px" width="12" height="32" viewBox="0 0 12 32"><path d="M2 7 L6 3 L10 7" fill="none" stroke="#b0b0b0" stroke-width="1"/><path d="M2 25 L6 29 L10 25" fill="none" stroke="#b0b0b0" stroke-width="1"/></svg>
<div class="t" style="left:429px;top:403.22px;font-size:12.5px;color:#333;font-weight:400;">%[DBF Description]%</div>
<div class="a" style="left:726px;top:447px;width:155px;height:25px;background:#f0f0f0;border:1px solid #adadad"></div>
<div class="t" style="left:745.9px;top:453.30px;font-size:13px;color:#333;font-weight:400;">Insert Placeholder...</div>
<div class="t" style="left:425.1px;top:485.09px;font-size:13.6px;color:#333;font-weight:400;">Additional prompt (add if one or more objects found):</div>
<div class="a" style="left:426px;top:505px;width:454px;height:41px;background:#fff;border:1px solid #acacac"></div>
<div class="a" style="left:862px;top:506px;width:17px;height:39px;background:#f0f0f0"></div>
<svg style="left:864px;top:509px" width="12" height="32" viewBox="0 0 12 32"><path d="M2 7 L6 3 L10 7" fill="none" stroke="#b0b0b0" stroke-width="1"/><path d="M2 25 L6 29 L10 25" fill="none" stroke="#b0b0b0" stroke-width="1"/></svg>
<div class="a" style="left:726px;top:554px;width:155px;height:25px;background:#f0f0f0;border:1px solid #adadad"></div>
<div class="t" style="left:745.9px;top:560.70px;font-size:13px;color:#333;font-weight:400;">Insert Placeholder...</div>
<div class="t" style="left:401.3px;top:605.00px;font-size:13px;color:#2b2b2b;font-weight:700;">Chat</div>
<div class="a" style="left:403px;top:620px;width:484px;height:1px;background:#b9b9b9"></div>
<div class="a" style="left:410px;top:630px;width:13px;height:13px;background:#fff;border:1px solid #9c9c9c"></div>
<div class="t" style="left:427.3px;top:631.00px;font-size:13px;color:#333;font-weight:400;">Enable chat features</div>
<div class="a" style="left:390px;top:668px;width:508px;height:1px;background:#a8a8a8"></div>
<div class="a" style="left:736px;top:676px;width:75px;height:25px;background:#f0f0f0;border:1px solid #3b3b3b"></div>
<div class="t" style="left:764px;top:683.00px;font-size:13px;color:#333;font-weight:400;">OK</div>
<div class="a" style="left:816px;top:676px;width:75px;height:25px;background:#f0f0f0;border:1px solid #adadad"></div>
<div class="t" style="left:833px;top:683.00px;font-size:13px;color:#333;font-weight:400;">Cancel</div>
<div class="a" style="left:900px;top:282.2px;width:65px;height:3px;background:#d43fe0"></div>
<svg style="left:897px;top:272px" width="16" height="24" viewBox="0 0 16 24"><path d="M12.5 1.8 L2.2 12 L12.5 22.2" fill="none" stroke="#d43fe0" stroke-width="2.6" stroke-linecap="round" stroke-linejoin="round"/></svg>
</div>
<div id="frame"></div>
</body></html>
